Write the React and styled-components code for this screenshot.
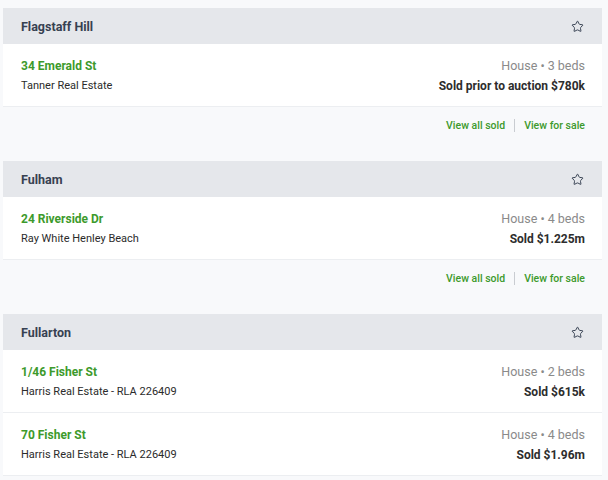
import styled, { createGlobalStyle } from 'styled-components'
import { Star } from 'lucide-react'

const GlobalStyle = createGlobalStyle`
    html, body {
        margin: 0;
        background: #f8f9fb;
        font-family: Roboto, "Liberation Sans", sans-serif;
    }
`

const Page = styled.div`
    padding: 8px 6px 0 3px;
`

const Section = styled.section`
    margin-bottom: 18px;
`

const Header = styled.div`
    height: 36px;
    background: #e5e7eb;
    display: flex;
    align-items: center;
    justify-content: space-between;
    padding: 0 18px;
    color: #374151;
    font-size: 12.5px;
    font-weight: 700;
`

const Row = styled.div`
    background: #fff;
    border-bottom: 1px solid #eceef1;
    height: 63px;
    box-sizing: border-box;
    padding: 1px 17px 0 18px;
    display: flex;
    justify-content: space-between;
    align-items: center;
`

const Col = styled.div`
    display: flex;
    flex-direction: column;
    gap: 6px;
    align-items: ${p => (p.$right ? 'flex-end' : 'flex-start')};
`

const Address = styled.a`
    color: #3d9a2c;
    font-weight: 700;
    font-size: 12px;
    text-decoration: none;
`

const Agency = styled.span`
    color: #2b2b2b;
    font-size: 11px;
`

const Meta = styled.span`
    color: #8a8a8a;
    font-size: 12.5px;
`

const Price = styled.span`
    color: #2d2d2d;
    font-size: 12px;
    font-weight: 700;
`

const Footer = styled.div`
    height: 36px;
    display: flex;
    justify-content: flex-end;
    align-items: center;
    padding-right: 17px;
    font-size: 10.5px;
    font-weight: 500;
`

const FooterLink = styled.a`
    color: #3d9a2c;
    text-decoration: none;
    & + & {
        border-left: 1px solid #c9ccd1;
        margin-left: 9px;
        padding-left: 9px;
    }
`

const suburbs = [
    {
        name: 'Flagstaff Hill',
        links: true,
        sales: [
            { address: '34 Emerald St', agency: 'Tanner Real Estate', beds: 3, price: 'Sold prior to auction $780k' },
        ],
    },
    {
        name: 'Fulham',
        links: true,
        sales: [
            { address: '24 Riverside Dr', agency: 'Ray White Henley Beach', beds: 4, price: 'Sold $1.225m' },
        ],
    },
    {
        name: 'Fullarton',
        sales: [
            { address: '1/46 Fisher St', agency: 'Harris Real Estate - RLA 226409', beds: 2, price: 'Sold $615k' },
            { address: '70 Fisher St', agency: 'Harris Real Estate - RLA 226409', beds: 4, price: 'Sold $1.96m' },
        ],
    },
]

export default function App() {
    return (
        <>
            <GlobalStyle />
            <Page>
                {suburbs.map(s => (
                    <Section key={s.name}>
                        <Header>
                            {s.name}
                            <Star size={13} strokeWidth={1.8} color='#374151' />
                        </Header>
                        {s.sales.map(sale => (
                            <Row key={sale.address}>
                                <Col>
                                    <Address href='#'>{sale.address}</Address>
                                    <Agency>{sale.agency}</Agency>
                                </Col>
                                <Col $right>
                                    <Meta>House • {sale.beds} beds</Meta>
                                    <Price>{sale.price}</Price>
                                </Col>
                            </Row>
                        ))}
                        {s.links && (
                            <Footer>
                                <FooterLink href='#'>View all sold</FooterLink>
                                <FooterLink href='#'>View for sale</FooterLink>
                            </Footer>
                        )}
                    </Section>
                ))}
            </Page>
        </>
    )
}
